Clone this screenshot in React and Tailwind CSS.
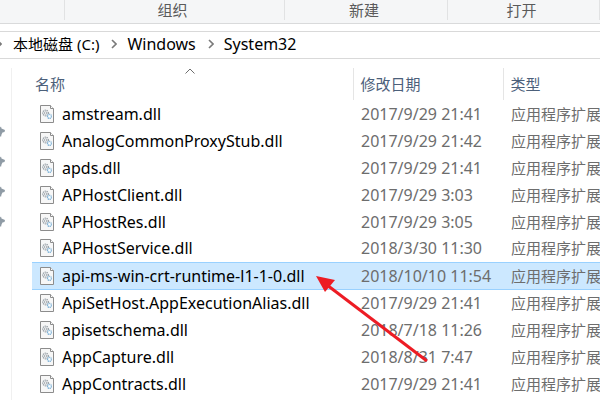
import React from "react";

const RIBBON_GROUPS = [
  { label: "", width: "w-[65px]" },
  { label: "组织", width: "w-[220px]" },
  { label: "新建", width: "w-[163px]" },
  { label: "打开", width: "w-[152px]" },
];

const FILES = [
  { name: "amstream.dll", date: "2017/9/29 21:41" },
  { name: "AnalogCommonProxyStub.dll", date: "2017/9/29 21:42" },
  { name: "apds.dll", date: "2017/9/29 21:41" },
  { name: "APHostClient.dll", date: "2017/9/29 3:03" },
  { name: "APHostRes.dll", date: "2017/9/29 3:05" },
  { name: "APHostService.dll", date: "2018/3/30 11:30" },
  { name: "api-ms-win-crt-runtime-l1-1-0.dll", date: "2018/10/10 11:54", selected: true },
  { name: "ApiSetHost.AppExecutionAlias.dll", date: "2017/9/29 21:41" },
  { name: "apisetschema.dll", date: "2018/7/18 11:26" },
  { name: "AppCapture.dll", date: "2018/8/31 7:47" },
  { name: "AppContracts.dll", date: "2017/9/29 21:41" },
];

function DllIcon() {
  return (
    <svg width="15" height="18" viewBox="0 0 15 18" className="shrink-0" aria-hidden="true">
      <path d="M0.5 0.5H10.5L13.5 3.5V17.5H0.5Z" fill="#f7f7f7" stroke="#8c8c8c" />
      <path d="M10.5 0.5V3.5H13.5" fill="#fff" stroke="#8c8c8c" />
      <circle cx="5.5" cy="8" r="2.8" fill="#f0f1f2" stroke="#8b949b" strokeWidth="1.2" strokeDasharray="1.1 0.9" />
      <circle cx="5.5" cy="8" r="1.2" fill="#fff" stroke="#9aa2a8" strokeWidth="0.8" />
      <circle cx="9.4" cy="11.3" r="2.1" fill="#e3f1fa" stroke="#76abd2" strokeWidth="1.1" strokeDasharray="1.1 0.6" />
      <circle cx="9.4" cy="11.3" r="0.8" fill="#fff" />
    </svg>
  );
}

function PinIcon() {
  return (
    <svg width="5" height="13" viewBox="0 0 5 13" className="block" aria-hidden="true">
      <path d="M0 1.5L1 0.5L1.5 2.5L5 4L4.5 6L2.5 6.5L1.5 8.5L1 11L0 10Z" fill="#8f9ba5" />
    </svg>
  );
}

function Chevron() {
  return (
    <svg width="6" height="10" viewBox="0 0 6 10" fill="none" className="shrink-0" aria-hidden="true">
      <path d="M1 1L5 5L1 9" stroke="#7a7a7a" strokeWidth="1.6" />
    </svg>
  );
}

export default function App() {
  return (
    <div className="relative min-h-screen overflow-hidden bg-white font-['Noto_Sans','Noto_Sans_CJK_SC',sans-serif] text-[15px] text-black">
      {/* Ribbon group labels */}
      <div className="flex h-6 border-b border-[#d9dadb] bg-[#f5f6f7]">
        {RIBBON_GROUPS.map((group, i) => (
          <div key={i} className={`h-5 border-r border-[#e1e2e3] pr-1 text-center leading-5 text-[#5a5a5a] ${group.width}`}>
            {group.label}
          </div>
        ))}
      </div>

      {/* Address bar */}
      <nav className="mt-[7px] flex h-7 items-center border-y border-[#d9d9d9] pb-0.5 whitespace-nowrap">
        <span className="-ml-1"><Chevron /></span>
        <a href="#drive" className="ml-[11px]">本地磁盘 (C:)</a>
        <span className="ml-3"><Chevron /></span>
        <a href="#windows" className="ml-[10px] text-base">Windows</a>
        <span className="ml-3"><Chevron /></span>
        <a href="#system32" className="ml-[10px] text-base">System32</a>
      </nav>

      <div className="mt-[9px] flex">
        {/* Edge of the quick access pane */}
        <aside className="flex h-[340px] w-3 shrink-0 flex-col gap-[17px] border-r border-[#f0f0f0] pt-[58px]">
          <PinIcon />
          <PinIcon />
          <PinIcon />
          <PinIcon />
        </aside>

        <table className="ml-5 w-full table-fixed border-collapse self-start text-left">
          <colgroup>
            <col className="w-[321px]" />
            <col className="w-[150px]" />
            <col />
          </colgroup>
          <thead>
            <tr className="h-8 text-[#4c607a]">
              <th className="relative pl-[3px] font-normal" aria-sort="ascending">
                <svg width="10" height="6" viewBox="0 0 10 6" fill="none" className="absolute top-0 left-[153px]" aria-hidden="true">
                  <path d="M0.5 5.5L5 1L9.5 5.5" stroke="#6d6d6d" />
                </svg>
                名称
              </th>
              <th className="border-l border-[#e5e5e5] pl-[7px] font-normal">修改日期</th>
              <th className="border-l border-[#e5e5e5] pl-[7px] font-normal">类型</th>
            </tr>
          </thead>
          <tbody>
            {FILES.map((file) => (
              <tr
                key={file.name}
                aria-selected={file.selected}
                className={`h-[27px] whitespace-nowrap ${file.selected ? "border-y border-[#99d1ff] bg-[#cce8ff]" : ""}`}
              >
                <td className="pl-2">
                  <div className="flex items-center gap-[7px] text-base leading-5">
                    <DllIcon />
                    {file.name}
                  </div>
                </td>
                <td className="pl-2 text-base leading-5 text-[#6d6d6d]">{file.date}</td>
                <td className="pl-2 leading-5 text-[#6d6d6d]">应用程序扩展</td>
              </tr>
            ))}
          </tbody>
        </table>
      </div>

      {/* Arrow pointing at the selected file */}
      <svg width="114" height="90" viewBox="0 0 114 90" className="pointer-events-none absolute top-[274px] left-[315px]" aria-hidden="true">
        <path d="M12 11L112 87" stroke="#ed1c24" strokeWidth="3" />
        <path d="M1 2L20 6L10 18Z" fill="#ed1c24" />
      </svg>
    </div>
  );
}
